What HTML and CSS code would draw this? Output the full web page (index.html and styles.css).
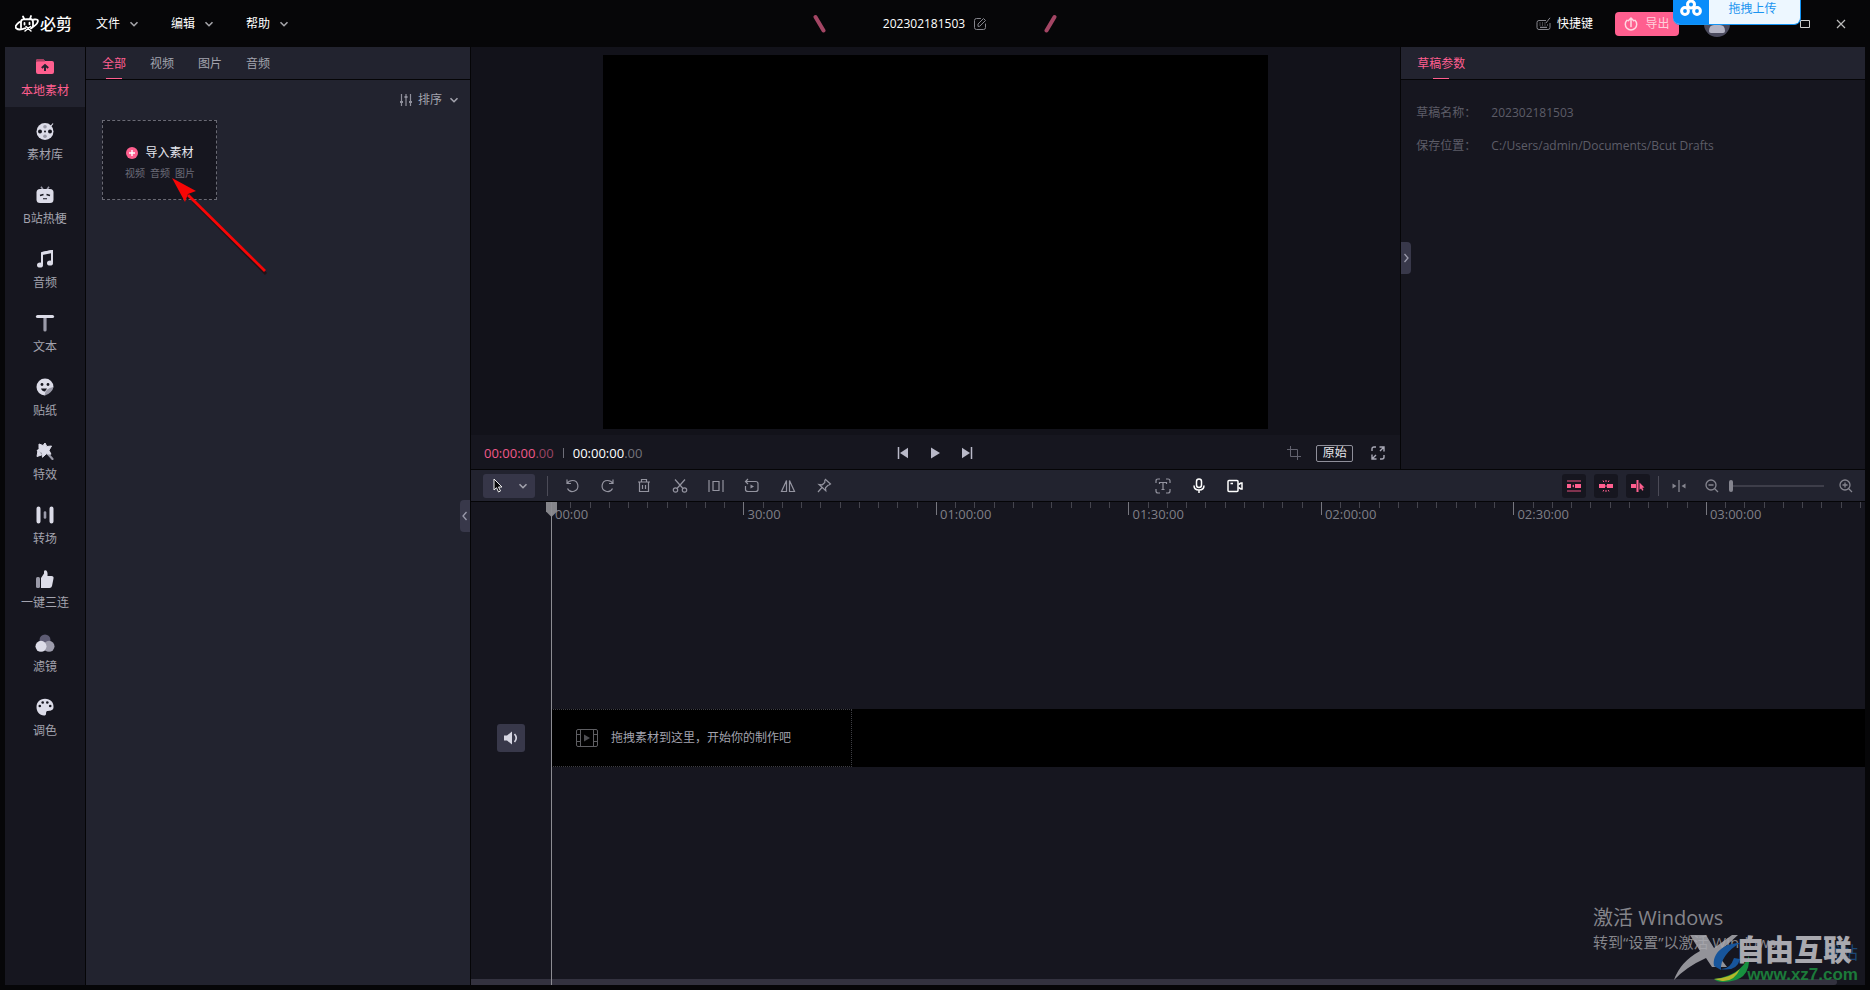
FILE: index.html
```html
<!DOCTYPE html>
<html lang="zh-CN">
<head>
<meta charset="utf-8">
<title>必剪</title>
<link rel="stylesheet" href="styles.css">
</head>
<body>
<svg class="defs" aria-hidden="true">
  <symbol id="chev" viewBox="0 0 10 10"><path d="M1.5 3.2 5 6.7 8.500 3.200" fill="none" stroke="currentColor" stroke-width="1.6"/></symbol>
</svg>
<header class="titlebar">
  <div class="title-left">
    <div class="logo">
      <svg width="24" height="18" viewBox="0 0 24 18" fill="none" stroke="#fff" stroke-width="1.800" stroke-linecap="round"><path d="M8 1.500 9.200 4M16 1 15 3.700M6 12.500V7q0-2.500 2.500-2.700L15 4q3 0 3 3v3.500q0 2-2 2.800M4.500 7C1 9.500-.5 12 1.500 13.500c1.500 1.300 5 1.200 9-.3M19 4.500c3-.7 4.500.3 3.700 2.500-.7 2-3.200 4.200-6.700 6M9.500 8v1.500M14.500 7.700v1.500"/><path d="m11 11.500 5 4.500M15.500 11.500 10 16" stroke-width="1.500"/></svg>
      <span>必剪</span>
    </div>
    <nav class="menus">
      <button>文件<svg width="10" height="10"><use href="#chev"/></svg></button>
      <button>编辑<svg width="10" height="10"><use href="#chev"/></svg></button>
      <button>帮助<svg width="10" height="10"><use href="#chev"/></svg></button>
    </nav>
  </div>
  <div class="title-center">
    <svg width="14" height="20" viewBox="0 0 14 20"><path d="M2.500 3 10.500 16.500" stroke="#a34564" stroke-width="4" stroke-linecap="round"/></svg>
    <div class="project"><span>202302181503</span>
      <button aria-label="重命名"><svg width="14" height="14" viewBox="0 0 14 14" fill="none" stroke="#85858c" stroke-linecap="round"><path d="M7.500 1.500H3.500q-2 0-2 2v7q0 2 2 2h7q2 0 2-2V7"/><path d="M5 9V7l5.500-5.500 2 2L7 9Z"/></svg></button>
    </div>
    <svg width="14" height="20" viewBox="0 0 14 20"><path d="M11.500 3 3.500 16.500" stroke="#a34564" stroke-width="4" stroke-linecap="round"/></svg>
  </div>
  <div class="title-right">
    <button class="keys"><svg width="16" height="14" viewBox="0 0 16 14" fill="none" stroke="#85858c"><path d="M10 3.500H3q-2 0-2 2v5q0 2 2 2h9q2 0 2-2V6M10 6 14 .8"/><path d="M3.500 6h1M6 6h1M8.500 6h1M3.500 8h1M6 8h1M8.500 8h1M11 8h1M4 10.300h7" stroke-width="1.200"/></svg>快捷键</button>
    <button class="export"><svg width="14" height="14" viewBox="0 0 14 14" fill="none" stroke="#ffd9e3" stroke-width="1.500" stroke-linecap="round"><path d="M3 3.200a5.700 5.700 0 1 0 8 0M7 9.500V1M4.300 3.700 7 1l2.700 2.700"/></svg>导出</button>
    <button class="avatar" aria-label="账号"><svg width="26" height="26" viewBox="0 0 26 26"><circle cx="13" cy="13" r="13" fill="#4a4a5d"/><circle cx="13" cy="9" r="5" fill="#b4b4c4"/><path d="M5 20q0-6 5-6h6q5 0 5 6 0 2-2 2H7q-2 0-2-2Z" fill="#b4b4c4"/></svg></button>
    <div class="window-buttons">
      <button aria-label="最小化"><svg width="10" height="10"><path d="M0 5.500h10" stroke="#bbb"/></svg></button>
      <button aria-label="最大化"><svg width="10" height="10"><path d="M.5 1.500h9v7h-9Z" fill="none" stroke="#ccc"/></svg></button>
      <button aria-label="关闭"><svg width="10" height="10"><path d="m1 1 8 8M9 1 1 9" stroke="#bbb" stroke-width="1.200"/></svg></button>
    </div>
  </div>
  <button class="upload"><span class="upload-icon"><svg width="22" height="16" viewBox="0 0 22 16" fill="none" stroke="#fff" stroke-width="3"><circle cx="11" cy="4.500" r="3.500"/><circle cx="5" cy="11" r="3.400"/><circle cx="17" cy="11" r="3.400"/></svg></span><span class="upload-text">拖拽上传</span></button>
</header>

<main class="workspace">
  <nav class="sidebar">
    <button class="active"><svg width="20" height="18" viewBox="0 0 20 18"><path d="M1 3q0-2 2-2h5l2 2h7q2 0 2 2v9q0 2-2 2H3q-2 0-2-2Z" fill="#ff5f8f"/><path d="M1 4q0-3 2-3h5l2 2.500H3q-2 0-2 1Z" fill="#a53e60"/><path d="M10 13V7.500M6.800 10 10 7l3.200 3" fill="none" stroke="#22232f" stroke-width="2"/></svg>本地素材</button>
    <button><svg width="20" height="18" viewBox="0 0 20 18"><circle cx="10" cy="9.500" r="8.500" fill="#dcdce8"/><path d="m16 4 2-2.500" stroke="#dcdce8" stroke-width="1.200"/><g fill="#16161f"><circle cx="5" cy="9.500" r="2"/><circle cx="15" cy="9.500" r="2"/><circle cx="10" cy="9.500" r="1"/></g><circle cx="10" cy="4.700" r="1.800" fill="#9a9aa8"/><circle cx="10" cy="14.300" r="1.800" fill="#9a9aa8"/></svg>素材库</button>
    <button><svg width="20" height="18" viewBox="0 0 20 18"><path d="m6 .8 2 2.700M14 .8l-2 2.700" stroke="#9a9aa8" stroke-width="1.600"/><rect x="1.500" y="3" width="17" height="14" rx="3.500" fill="#dcdce8"/><path d="m5 9.500 3.500-1M15 9.500l-3.500-1" stroke="#16161f" stroke-width="1.500"/><path d="M8 12.500q1 1 2 0 1 1 2 0" fill="none" stroke="#16161f"/></svg>B站热梗</button>
    <button><svg width="20" height="18" viewBox="0 0 20 18"><path d="M7 14.500V3l10-2v11.500" fill="none" stroke="#dcdce8" stroke-width="2"/><path d="M7 3.500 17 1.500" stroke="#dcdce8" stroke-width="3"/><ellipse cx="5" cy="15" rx="3" ry="2.600" fill="#dcdce8"/><ellipse cx="15" cy="13" rx="3" ry="2.600" fill="#dcdce8"/></svg>音频</button>
    <button><svg width="20" height="18" viewBox="0 0 20 18"><path d="M10 4v12" stroke="#9a9aa8" stroke-width="3.200" stroke-linecap="round"/><path d="M2.500 2.500h15" stroke="#dcdce8" stroke-width="3.200" stroke-linecap="round"/></svg>文本</button>
    <button><svg width="20" height="18" viewBox="0 0 20 18"><path d="M18.500 9A8.500 8.500 0 1 0 10 17.500Z" fill="#dcdce8"/><path d="M9.500 17.500q.5-7.500 9-8.500-.5 3-3 5.300-2.500 2.700-6 3.200Z" fill="#9a9aa8"/><circle cx="7" cy="6.500" r="1.400" fill="#16161f"/><circle cx="13" cy="6.500" r="1.400" fill="#16161f"/><path d="M6 10.500h6l-2 3q-3 0-4-3Z" fill="#16161f"/></svg>贴纸</button>
    <button><svg width="20" height="18" viewBox="0 0 20 18"><path d="m13 12 4.500 5" stroke="#9a9aa8" stroke-width="2.200" stroke-linecap="round"/><path d="M10 1 11.800 4.500 16.500 4 14 8.300 16 12.200 11.300 11.800 7.500 15.300 6.800 10.800 2 8.800 4 6.700V2l4 1.500Z" fill="#dcdce8" stroke="#dcdce8" stroke-linejoin="round"/><path d="M3 8.500 2 14.500l4.500-1.500Z" fill="#dcdce8" stroke="#dcdce8" stroke-linejoin="round"/></svg>特效</button>
    <button><svg width="20" height="18" viewBox="0 0 20 18" stroke-linecap="round"><path d="M3.500 2.500v13M16.500 2.500v13" stroke="#dcdce8" stroke-width="4"/><path d="M10 6.500v5" stroke="#9a9aa8" stroke-width="2.600"/></svg>转场</button>
    <button><svg width="20" height="18" viewBox="0 0 20 18"><rect x="1" y="7" width="4" height="11" rx="1.500" fill="#9a9aa8"/><path d="M6 8 9 3.500V1.500Q9 .3 10.500.3q2.500.7 2 5.700h4q2.500 0 2 2.500l-1.500 7.500q-.5 2-2.500 2H6Z" fill="#dcdce8"/></svg>一键三连</button>
    <button><svg width="20" height="18" viewBox="0 0 20 18"><circle cx="10" cy="6" r="5.500" fill="#5d5b73"/><circle cx="14" cy="12.300" r="5.500" fill="#9d9cac"/><circle cx="6" cy="12.300" r="5.500" fill="#dcdce8"/></svg>滤镜</button>
    <button><svg width="20" height="18" viewBox="0 0 20 18"><path d="M10 .7C4.500.7 1.500 4.500 1.500 9s3 8.500 7.500 8.500c3 0 1.500-2.500 2.500-4 1.200-1.500 6.500.5 7-4C19 4.500 15.500.7 10 .7Z" fill="#dcdce8"/><g fill="#16161f"><circle cx="4.800" cy="8" r="1.300"/><circle cx="7.700" cy="4.500" r="1.300"/><circle cx="12.300" cy="4.500" r="1.300"/><circle cx="15.200" cy="8" r="1.300"/></g></svg>调色</button>
  </nav>

  <section class="media">
    <div class="tabs">
      <button class="active">全部</button><button>视频</button><button>图片</button><button>音频</button>
    </div>
    <div class="media-body">
      <button class="sort"><svg width="12" height="14" viewBox="0 0 12 14" stroke="#8f8f9b" stroke-width="1.200"><path d="M1.500 1v12M6 1v12M10.500 1v12"/><path d="M0 9h3M4.500 4h3M9 9h3" stroke-width="2"/></svg>排序<svg class="sort-chev" width="10" height="10"><use href="#chev"/></svg></button>
      <button class="import">
        <span class="import-title"><svg width="12" height="12"><circle cx="6" cy="6" r="6" fill="#ff5f8f"/><path d="M3 6h6M6 3v6" stroke="#fff" stroke-width="1.400"/></svg>导入素材</span>
        <span class="import-types"><span>视频</span><span>音频</span><span>图片</span></span>
      </button>
    </div>
    <button class="handle handle-media" aria-label="收起素材栏"><svg width="8" height="10" viewBox="0 0 8 10"><path d="M5.500 1 2 5l3.500 4" fill="none" stroke="#9a9aab" stroke-width="1.300"/></svg></button>
    <svg class="arrow" width="110" height="110" viewBox="0 0 110 110"><path d="M20 21 93 94" stroke="#200" stroke-width="3" opacity=".5" transform="translate(1 2)"/><path d="M16 17 93 93" stroke="#f80606" stroke-width="2.800"/><path d="M0 0 24 13 16 16 13 24Z" fill="#f80606"/></svg>
  </section>

  <div class="editor">
    <section class="preview">
      <div class="screen-area"><div class="screen"></div></div>
      <div class="controls">
        <div class="times"><span class="now">00:00:00<i>.00</i></span><span class="bar"></span><span class="total">00:00:00<i>.00</i></span></div>
        <div class="transport">
          <button aria-label="上一帧"><svg width="12" height="12"><path d="M1.500 0v12" stroke="#b9b9c8" stroke-width="1.500"/><path d="M11 .8v10.400L3 6Z" fill="#b9b9c8"/></svg></button>
          <button aria-label="播放"><svg width="12" height="12"><path d="M2 .5v11L11 6Z" fill="#b9b9c8"/></svg></button>
          <button aria-label="下一帧"><svg width="12" height="12"><path d="M10.500 0v12" stroke="#b9b9c8" stroke-width="1.500"/><path d="M1 .8v10.400L9 6Z" fill="#b9b9c8"/></svg></button>
        </div>
        <div class="view">
          <button aria-label="裁剪"><svg width="14" height="14" fill="none" stroke="#62626e"><path d="M3.500 0v10.500H14M0 3.500h10.500V14"/></svg></button>
          <button class="ratio">原始</button>
          <button aria-label="全屏"><svg width="14" height="14" viewBox="0 0 14 14" fill="none" stroke="#a9a9b6" stroke-width="1.400"><path d="M5 1H3Q1 1 1 3v2M9 13h2q2 0 2-2V9M8.500 1H13v4.500M13 1 9 5M5.500 13H1V8.500M1 13l4-4"/></svg></button>
        </div>
      </div>
    </section>

    <section class="properties">
      <div class="tabs"><button class="active">草稿参数</button></div>
      <dl>
        <dt>草稿名称：</dt><dd>202302181503</dd>
        <dt>保存位置：</dt><dd>C:/Users/admin/Documents/Bcut Drafts</dd>
      </dl>
      <button class="handle handle-props" aria-label="收起参数栏"><svg width="8" height="10" viewBox="0 0 8 10"><path d="M2.500 1 6 5 2.500 9" fill="none" stroke="#9a9aab" stroke-width="1.300"/></svg></button>
    </section>

    <div class="toolbar">
      <div class="tools">
        <button class="pointer" aria-label="选择工具"><svg width="12" height="16" viewBox="0 0 12 16"><path d="M2 1v11l2.500-2.300L6.500 14l2-1-2-4H10Z" fill="#08080a" stroke="#eee"/></svg><svg width="10" height="10"><use href="#chev"/></svg></button>
        <span class="sep"></span>
        <div class="tool-row">
          <button aria-label="撤销"><svg viewBox="0 0 16 16"><path d="M3 1.500v4h4M3 5.500Q5 2.500 8.500 2.500a5.500 5.500 0 1 1-5 8"/></svg></button>
          <button aria-label="重做"><svg viewBox="0 0 16 16"><path d="M13 1.500v4H9M13 5.500Q11 2.500 7.500 2.500a5.500 5.500 0 1 0 5 8"/></svg></button>
          <button aria-label="删除"><svg viewBox="0 0 16 16"><path d="M2 4h12M5.500 3.500v-2h5v2M3.500 4.500v9h9v-9M6.500 7v4M9.500 7v4"/></svg></button>
          <button aria-label="分割"><svg viewBox="0 0 16 16"><circle cx="3.500" cy="12" r="2.200"/><circle cx="12.500" cy="12" r="2.200"/><path d="M3 1.500 11 10.500M13 1.500 5 10.500"/></svg></button>
          <button aria-label="裁切"><svg viewBox="0 0 16 16"><path d="M1 2v12M15 2v12M5 3.500h6v9H5Z"/></svg></button>
          <button aria-label="倒放"><svg viewBox="0 0 16 16"><path d="M1.500 3.500h10q2.500 0 2.500 2v6q0 2-2.500 2H4q-2.500 0-2.500-2V8M4 1 1.500 3.500 4 6"/><path d="m6.500 6.500 3.500 2-3.500 2Z" fill="#9494a0" stroke="none"/></svg></button>
          <button aria-label="镜像"><svg viewBox="0 0 16 16"><path d="M6.500 2.500v11h-5ZM9.500 2.500v11h5Z"/></svg></button>
          <button aria-label="定格"><svg viewBox="0 0 16 16"><path d="m9.500 1.500 5 4.500-1.500 1-1 .3-2.500 2.500.3 3L3 6.500l3.300.3L8.800 4.500V2.500ZM6 9.500l-4 4.500"/></svg></button>
        </div>
      </div>
      <div class="tool-row">
        <button aria-label="字幕识别"><svg viewBox="0 0 16 16"><path d="M1 5V3q0-2 2-2h2M11 1h2q2 0 2 2v2M15 11v2q0 2-2 2h-2M5 15H3q-2 0-2-2v-2M4.500 6V4.500h7V6M8 4.500v7M6.500 11.500h3"/></svg></button>
        <button class="bright" aria-label="录音"><svg viewBox="0 0 16 16"><rect x="5.500" y="1" width="5" height="8.500" rx="2.500"/><path d="M3 7.500q0 4.500 5 4.500t5-4.500M8 12v3"/></svg></button>
        <button class="bright" aria-label="录屏"><svg viewBox="0 0 16 16"><rect x="1" y="2.500" width="10" height="11" rx="1"/><path d="M11.500 6.500 14 5h1v6h-1l-2.500-1.500M3.500 5.500h2.500"/></svg></button>
      </div>
      <div class="options">
        <div class="toggles">
          <button aria-label="主轨联动"><svg width="16" height="12"><path d="M1 1h14M1 11h14" stroke="#a53e60" stroke-width="1.500"/><path d="M1 4h4v4H1ZM9 4h6v4H9ZM6 6l2-1.500v3Z" fill="#ff5f8f"/></svg></button>
          <button aria-label="自动吸附"><svg width="16" height="12"><path d="M1 4h6v4H1ZM9 4h6v4H9Z" fill="#ff5f8f"/><path d="M8 0v2M8 10v2M5 .5l.8 1.500M11 .5l-.8 1.500M5 11.500l.8-1.500M11 11.500l-.8-1.500M8 5v2" stroke="#ff5f8f"/></svg></button>
          <button aria-label="悬停预览"><svg width="16" height="12"><path d="M1 4h5v4H1Z" fill="#ff5f8f"/><path d="M7.500 0v12" stroke="#ff5f8f" stroke-width="2"/><path d="m9.500 2.500 5 5-2.200.2L13.500 10l-1.300.7L11 8.500 9.500 9.800Z" fill="#ff5f8f"/></svg></button>
        </div>
        <span class="sep"></span>
        <button class="snap" aria-label="适应时间线"><svg width="16" height="14"><path d="M8 1v12" stroke="#85858f" stroke-width="1.300"/><path d="m1.500 4.500 4 2.500-4 2.500ZM14.500 4.500l-4 2.500 4 2.500Z" fill="#85858f"/></svg></button>
        <button aria-label="缩小"><svg width="14" height="14" fill="none" stroke="#85858f" stroke-width="1.300"><circle cx="6" cy="6" r="5"/><path d="m9.500 9.500 3.500 3.500M3.500 6h5"/></svg></button>
        <input class="zoom" type="range" min="0" max="100" value="0" aria-label="缩放">
        <button aria-label="放大"><svg width="14" height="14" fill="none" stroke="#85858f" stroke-width="1.300"><circle cx="6" cy="6" r="5"/><path d="m9.500 9.500 3.500 3.500M3.500 6h5M6 3.500v5"/></svg></button>
      </div>
    </div>

    <section class="timeline">
      <div class="ruler">
        <div class="seg"><b>00:00</b><i></i><i></i><i></i><i></i><i></i><i></i><i></i><i></i><i></i><i></i></div>
        <div class="seg"><b>30:00</b><i></i><i></i><i></i><i></i><i></i><i></i><i></i><i></i><i></i><i></i></div>
        <div class="seg"><b>01:00:00</b><i></i><i></i><i></i><i></i><i></i><i></i><i></i><i></i><i></i><i></i></div>
        <div class="seg"><b>01:30:00</b><i></i><i></i><i></i><i></i><i></i><i></i><i></i><i></i><i></i><i></i></div>
        <div class="seg"><b>02:00:00</b><i></i><i></i><i></i><i></i><i></i><i></i><i></i><i></i><i></i><i></i></div>
        <div class="seg"><b>02:30:00</b><i></i><i></i><i></i><i></i><i></i><i></i><i></i><i></i><i></i><i></i></div>
        <div class="seg"><b>03:00:00</b><i></i><i></i><i></i><i></i><i></i><i></i><i></i><i></i><i></i><i></i></div>
      </div>
      <div class="tracks">
        <div class="track">
          <div class="gutter"><button class="mute" aria-label="静音"><svg width="16" height="14"><path d="M1 4.500h3L9 .5v13L4 9.500H1Z" fill="#d6d6e2"/><path d="M11.500 3q3.500 4 0 8" fill="none" stroke="#d6d6e2" stroke-width="1.600"/></svg></button></div>
          <div class="lane"><div class="drop"><svg width="22" height="18" fill="none" stroke="#5e5e62"><rect x=".5" y=".5" width="21" height="17" rx="1.500"/><path d="M4.500 1v16M17.500 1v16M1 5.500h3.500M1 12.500h3.500M17.500 5.500H21M17.500 12.500H21"/><path d="m8 5.500 6 3.500-6 3.500Z" fill="#4e4e52" stroke="none"/></svg>拖拽素材到这里，开始你的制作吧</div></div>
        </div>
      </div>
      <div class="scroll"><div class="scroll-thumb"></div></div>
      <div class="playhead"><svg width="11" height="15"><path d="M0 0h11v9.500L5.500 15 0 9.500Z" fill="#85858a"/></svg></div>
    </section>
  </div>
</main>

<div class="activate"><p class="big">激活 Windows</p><p>转到“设置”以激活 Windows。</p></div>
<div class="site">
  <svg class="site-mark" width="90" height="50" viewBox="0 0 90 50"><path d="M18 2h16l8 13L60 2h6L45 21 55 34H40L34 25 Q14 34 2 47 8 29 28 18Z" fill="#a9a9af" opacity=".85"/><path d="M68 10C52 10 40 20 42 33l7 4C48 27 56 17 68 10Z" fill="#17559b"/><path d="M48 36q10 1 14-11l6 1q-3 13-20 10Z" fill="#17559b"/><path d="M42 46q26-3 35-23 2 26-26 26-6 0-9-3Z" fill="#17913f"/><path d="M42 46q17-1 26-10-6 13-18 12Z" fill="#b6b72a"/></svg>
  <div class="site-text"><span class="site-back">载站</span><strong>自由互联</strong><span class="site-url">www.xz7.com</span></div>
</div>
</body>
</html>
```

FILE: styles.css
```css
* { box-sizing: border-box; }
body {
  margin: 0;
  height: 100vh;
  display: flex;
  flex-direction: column;
  padding-bottom: 5px;
  overflow: hidden;
  background: #060608;
  color: #a3a3ae;
  font: 12px/16px "Open Sans", "Noto Sans CJK SC", sans-serif;
}
button {
  display: flex;
  align-items: center;
  justify-content: center;
  margin: 0;
  padding: 0;
  border: 0;
  background: none;
  color: inherit;
  font: inherit;
}
svg { flex: none; display: block; }
.defs { position: absolute; width: 0; height: 0; }
i { font-style: normal; }

/* title bar */
.titlebar {
  position: relative;
  flex: none;
  height: 47px;
  display: grid;
  grid-template-columns: 1fr auto 1fr;
  align-items: center;
  padding: 0 15px;
  color: #fff;
}
.title-left, .logo, .menus, .title-center, .project, .title-right, .window-buttons { display: flex; align-items: center; }
.title-left { gap: 24px; }
.logo { gap: 1px; font-size: 16px; font-weight: 500; }
.menus { gap: 32px; }
.menus button { gap: 9px; }
.menus svg { color: #a5a5aa; }
.title-center { gap: 56px; }
.project { gap: 8px; }
.title-right { justify-content: flex-end; padding-right: 9px; }
.keys { gap: 5px; margin-right: 22px; }
.export {
  gap: 7px;
  width: 64px;
  height: 24px;
  margin-right: 25px;
  border-radius: 4px;
  background: #ff5f8f;
  color: #ffd0dc;
}
.window-buttons { gap: 26px; margin-left: 34px; }
.upload {
  position: absolute;
  top: -8px;
  right: 69px;
  height: 33px;
  width: 128px;
  align-items: stretch;
  overflow: hidden;
  border-radius: 7px;
  border: solid #1494f5;
  border-width: 0 1px 1px 0;
  background: #edf7ff;
  color: #1a94f0;
}
.upload-icon { width: 36px; display: flex; align-items: center; justify-content: center; background: #0a8dfa; }
.upload-text { flex: 1; display: flex; align-items: center; justify-content: center; padding: 2px 4px 0 0; }

/* workspace */
.workspace {
  flex: 1;
  min-height: 0;
  display: grid;
  grid-template-columns: 80px 384px minmax(0, 1fr);
  gap: 1px;
  margin: 0 5px;
  background: #050507;
}
.sidebar { display: flex; flex-direction: column; gap: 4px; background: #16161f; }
.sidebar button { flex-direction: column; gap: 7px; height: 60px; padding-top: 3px; }
.sidebar .active { background: #22232f; color: #ff5f8f; }

.tabs { display: flex; gap: 24px; height: 33px; padding: 0 16px; background: #22232f; border-bottom: 1px solid #050507; }
.tabs button { position: relative; padding-top: 2px; }
.tabs .active { color: #ff5f8f; }
.tabs .active::after {
  content: "";
  position: absolute;
  left: 50%;
  bottom: 0;
  width: 16px;
  height: 1px;
  margin-left: -8px;
  background: #ff5f8f;
}
.media { position: relative; background: #22232f; }
.media-body { display: flex; flex-direction: column; gap: 12px; padding: 12px 11px 0 16px; }
.sort { align-self: flex-end; gap: 6px; }
.sort-chev { margin-left: 1px; }
.import {
  flex-direction: column;
  gap: 4px;
  width: 115px;
  height: 80px;
  padding: 5px 0 0 1px;
  border: 1px dashed #6a6a74;
  background: #16161f;
  color: #e6e6ee;
}
.import-title { display: flex; align-items: center; gap: 7px; }
.import-types { display: flex; gap: 5px; color: #6c6c78; font-size: 10px; }
.handle { position: absolute; width: 10px; height: 32px; background: #38384a; }
.handle-media { right: 0; top: 453px; border-radius: 4px 0 0 4px; }
.handle-props { left: 0; top: 195px; border-radius: 0 4px 4px 0; }
.arrow { position: absolute; left: 86px; top: 131px; }

.editor {
  display: grid;
  grid-template-columns: minmax(0, 2fr) minmax(0, 1fr);
  grid-template-rows: minmax(0, 422fr) 33px minmax(0, 483fr);
}
.preview { display: flex; flex-direction: column; padding-top: 8px; background: #12121a; }
.screen-area { flex: 1; min-height: 0; display: flex; justify-content: center; }
.screen { height: 100%; aspect-ratio: 16 / 9; background: #000; }
.controls {
  display: grid;
  grid-template-columns: 1fr auto 1fr;
  align-items: center;
  height: 34px;
  margin-top: 6px;
  padding: 2px 15px 0 13px;
  background: #16161f;
}
.times, .transport, .view { display: flex; align-items: center; }
.times { gap: 9px; font-size: 13px; }
.now { color: #f0598a; }
.now i { color: #9b4563; }
.total { color: #fff; }
.total i { color: #73737b; }
.bar { width: 1px; height: 10px; background: #6e6e78; }
.transport { gap: 20px; }
.view { justify-content: flex-end; gap: 15px; }
.ratio { width: 37px; height: 17px; margin-right: 3px; border: 1px solid #8f8f9a; border-radius: 2px; color: #e8e8ee; }

.properties { position: relative; border-left: 1px solid #050507; background: #16161f; }
.properties dl {
  display: grid;
  grid-template-columns: 60px 1fr;
  gap: 17px 15px;
  margin: 0;
  padding: 25px 15px;
  color: #5d5d68;
}
.properties dd { margin: 0; }

.toolbar {
  grid-column: 1 / -1;
  display: flex;
  justify-content: space-between;
  align-items: center;
  padding: 0 12px;
  background: #22232f;
  border: solid #050507;
  border-width: 1px 0;
}
.tools, .tool-row, .options, .toggles { display: flex; align-items: center; }
.tools { padding-right: 5px; }
.pointer { width: 52px; height: 24px; gap: 14px; padding-left: 2px; border-radius: 3px; background: #363648; }
.sep { width: 1px; height: 20px; background: #4b4b57; }
.tools .sep { margin: 0 16px 0 12px; }
.tool-row { gap: 20px; }
.tool-row svg { width: 16px; height: 16px; fill: none; stroke: #9494a0; stroke-width: 1.2; }
.tool-row .bright svg { stroke: #fff; stroke-width: 1.5; }
.toggles { gap: 8px; }
.toggles button { width: 24px; height: 24px; border-radius: 3px; background: #16161f; }
.options .sep { margin: 0 12px 0 8px; }
.snap { margin-right: 18px; }
.zoom {
  appearance: none;
  width: 95px;
  height: 12px;
  margin: 0 15px 0 10px;
  background: linear-gradient(#3e3e4a, #3e3e4a) center / 100% 2px no-repeat;
}
.zoom::-webkit-slider-thumb { appearance: none; width: 4px; height: 12px; border-radius: 2px; background: #85858f; }

/* timeline */
.timeline { position: relative; grid-column: 1 / -1; display: flex; flex-direction: column; background: #16161f; }
.ruler { display: flex; height: 24px; margin-left: 80px; overflow: hidden; }
.seg { position: relative; flex: 0 0 14.65%; display: flex; }
.seg i { flex: 1; height: 6px; border-left: 1px solid #45454e; }
.seg i:first-of-type { height: 13px; border-color: #77777f; }
.seg b { position: absolute; left: 4px; top: 4px; color: #7f7f87; font-size: 13px; font-weight: 400; }
.tracks { flex: 1; display: flex; flex-direction: column; justify-content: center; padding-bottom: 30px; }
.track { display: flex; }
.gutter { width: 80px; display: flex; align-items: center; padding-left: 26px; }
.mute { width: 28px; height: 28px; border-radius: 3px; background: #38384a; }
.lane { flex: 1; height: 58px; background: #000; }
.drop { display: flex; align-items: center; gap: 13px; width: 301px; height: 100%; padding: 1px 0 0 24px; border: 1px dotted #3e3e44; }
.scroll { height: 6px; padding-right: 28px; }
.scroll-thumb { height: 6px; border-radius: 0 3px 3px 0; background: #33323f; }
.playhead { position: absolute; left: 75px; top: 0; bottom: 0; width: 11px; }
.playhead::after { content: ""; position: absolute; left: 5px; top: 0; bottom: 0; width: 1px; background: #8c8c92; }

/* overlays */
.activate { position: absolute; right: 73px; bottom: 38px; width: 204px; white-space: nowrap; color: #85858b; font-size: 15px; line-height: 20px; }
.activate p { margin: 0; }
.activate .big { font-size: 20px; line-height: 28px; }
.site { position: absolute; right: 12px; bottom: 7px; display: flex; }
.site-mark { margin-right: -26px; }
.site-text { position: relative; display: flex; flex-direction: column; align-items: flex-end; }
.site-text strong { position: relative; margin-right: 6px; font-size: 29px; line-height: 34px; font-weight: 900; color: #a9a9af; }
.site-back { position: absolute; right: 0; top: 10px; font-size: 17px; line-height: 20px; color: #1b4674; }
.site-url { color: #1c7a3a; font: 700 17px/16px "Liberation Sans", Arial, sans-serif; }
```
